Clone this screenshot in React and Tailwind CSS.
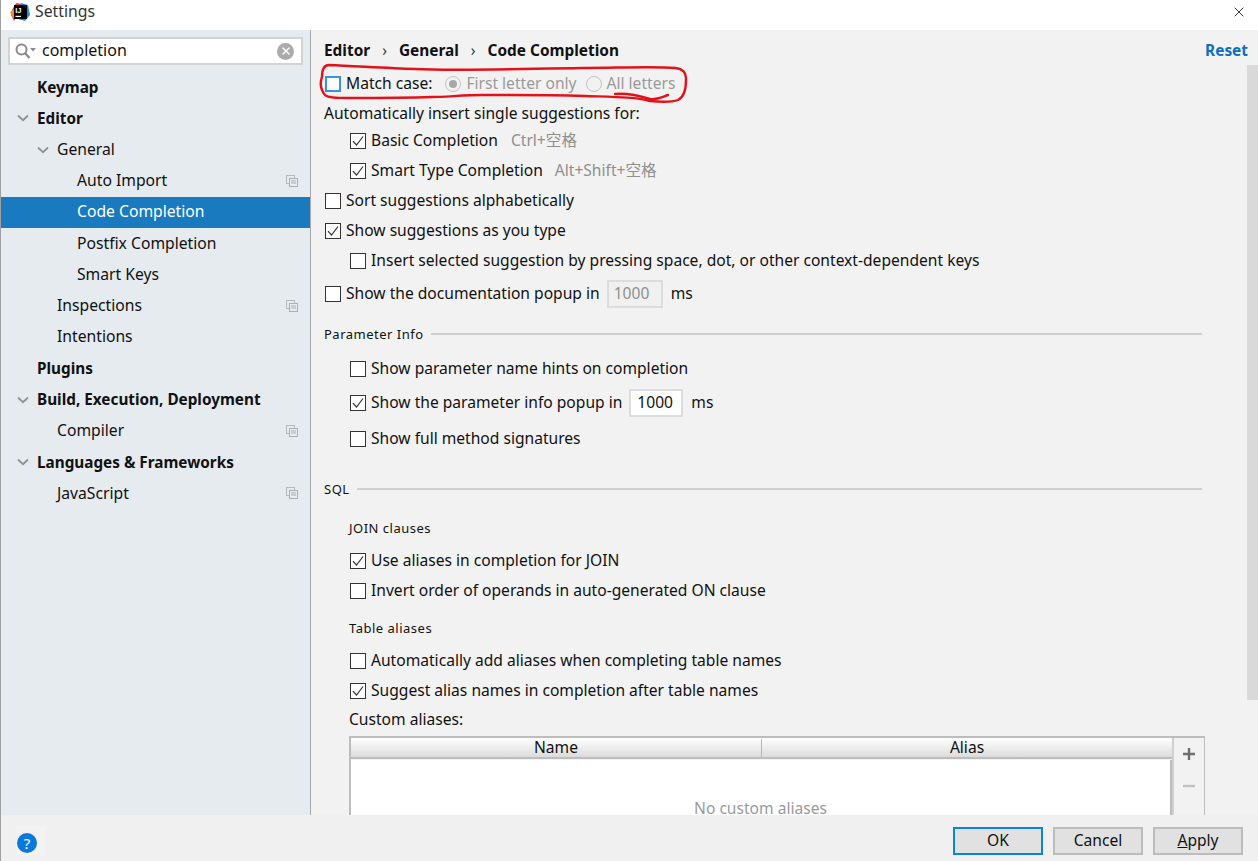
import { X } from "lucide-react";

const treeItems = [
  { label: "Keymap", indent: "pl-[36px]", bold: true },
  { label: "Editor", indent: "pl-[36px]", bold: true, arrow: "left-[16px]" },
  { label: "General", indent: "pl-[56px]", arrow: "left-[36px]" },
  { label: "Auto Import", indent: "pl-[76px]", copy: true },
  { label: "Code Completion", indent: "pl-[76px]", selected: true },
  { label: "Postfix Completion", indent: "pl-[76px]" },
  { label: "Smart Keys", indent: "pl-[76px]" },
  { label: "Inspections", indent: "pl-[56px]", copy: true },
  { label: "Intentions", indent: "pl-[56px]" },
  { label: "Plugins", indent: "pl-[36px]", bold: true },
  { label: "Build, Execution, Deployment", indent: "pl-[36px]", bold: true, arrow: "left-[16px]" },
  { label: "Compiler", indent: "pl-[56px]", copy: true },
  { label: "Languages & Frameworks", indent: "pl-[36px]", bold: true, arrow: "left-[16px]" },
  { label: "JavaScript", indent: "pl-[56px]", copy: true },
];

function AppLogo() {
  return (
    <svg width="20" height="20" viewBox="0 0 20 20" className="shrink-0">
      <path d="M2 8 L6 1 L12 2 L9 12 L4 19 L1 13 Z" fill="#f0326a" />
      <path d="M0 10 L5 7 L7 15 L3 16 Z" fill="#f78c2c" />
      <path d="M11 1 L18 3 L20 13 L15 19 L8 17 Z" fill="#1f8ceb" />
      <rect x="4" y="3" width="13" height="14" fill="#000" />
      <text x="5.2" y="10.5" fontSize="7.5" fontWeight="700" fill="#fff" fontFamily="Liberation Sans, sans-serif">IJ</text>
      <rect x="5.5" y="13.8" width="5.5" height="1.2" fill="#fff" />
    </svg>
  );
}

function CopyIcon() {
  return (
    <svg width="12" height="12" viewBox="0 0 12 12" className="absolute left-[285px] top-1/2 -translate-y-1/2">
      <rect x="0.5" y="0.5" width="8" height="8" fill="none" stroke="#b3bac1" />
      <rect x="3.5" y="3.5" width="8" height="8" fill="#e6ebf0" stroke="#a9b0b7" />
      <path d="M5 6h5M5 8h5" stroke="#a9b0b7" />
    </svg>
  );
}

function TreeRow({ item }) {
  return (
    <div
      className={`relative flex h-[31.25px] items-center ${item.indent} ${item.bold ? "text-[15.3px] font-bold" : "text-[15.7px]"} ${item.selected ? "bg-[#1a7abf] text-white" : "text-[#111111]"}`}
    >
      {item.arrow && (
        <svg width="12" height="8" viewBox="0 0 12 8" className={`absolute top-1/2 -translate-y-1/2 ${item.arrow}`}>
          <path d="M1 1.5 L6 6.2 L11 1.5" fill="none" stroke="#8d9296" strokeWidth="1.8" />
        </svg>
      )}
      {item.label}
      {item.copy && <CopyIcon />}
    </div>
  );
}

function Checkbox({ checked, focused }) {
  return (
    <span
      className={`flex h-[16px] w-[16px] shrink-0 items-center justify-center bg-white ${focused ? "border-2 border-[#3b93df]" : "border border-[#333333]"}`}
    >
      {checked && (
        <svg width="14" height="14" viewBox="0 0 14 14">
          <path d="M2 7.2 L5.5 11 L12 2.5" fill="none" stroke="#333333" strokeWidth="1.2" />
        </svg>
      )}
    </span>
  );
}

function OptionRow({ checked, label, nested, className = "h-[30px]", children }) {
  return (
    <div className={`flex items-center gap-[5px] ${nested ? "pl-[26px]" : "pl-[1px]"} ${className}`}>
      <Checkbox checked={checked} />
      <span>{label}</span>
      {children}
    </div>
  );
}

function Radio({ selected }) {
  return (
    <span className="flex h-[16px] w-[16px] shrink-0 items-center justify-center rounded-full border border-[#c4c4c4] bg-[#f2f2f2]">
      {selected && <span className="h-[8px] w-[8px] rounded-full bg-[#a8a8a8]" />}
    </span>
  );
}

function SectionTitle({ title, className }) {
  return (
    <div className={`flex items-center gap-[7px] text-[13px] tracking-[0.5px] ${className}`}>
      <span>{title}</span>
      <span className="mb-[3px] h-[2px] flex-1 bg-[#cfcfcf]" />
    </div>
  );
}

function Settings() {
  return (
    <div className="relative flex-1 overflow-hidden bg-[#f2f2f2] pl-[13px] pr-[10px] text-[15.6px] text-[#111111]">
      <div className="flex h-[33px] items-end justify-between pb-[1px] text-[15.4px]">
        <div className="flex items-center gap-[12px] font-bold">
          <span>Editor</span>
          <span className="font-normal text-[#333333]">›</span>
          <span>General</span>
          <span className="font-normal text-[#333333]">›</span>
          <span>Code Completion</span>
        </div>
        <span className="font-bold text-[#0d6fc4]">Reset</span>
      </div>

      <div className="mt-[6px] flex h-[30px] items-center pl-[1px]">
        <div className="flex items-center gap-[5px]">
          <Checkbox focused />
          <span>Match case:</span>
        </div>
        <div className="ml-[13px] flex items-center gap-[5px] text-[#9a9a9a]">
          <Radio selected />
          <span>First letter only</span>
        </div>
        <div className="ml-[9px] flex items-center gap-[5px] text-[#9a9a9a]">
          <Radio />
          <span>All letters</span>
        </div>
      </div>
      <div className="flex h-[29px] items-center">Automatically insert single suggestions for:</div>
      <OptionRow checked nested label="Basic Completion" className="h-[26px]">
        <span className="ml-[8px] text-[#8f8f8f]">Ctrl+空格</span>
      </OptionRow>
      <OptionRow checked nested label="Smart Type Completion" className="mt-[2px] h-[30px]">
        <span className="ml-[7px] text-[#8f8f8f]">Alt+Shift+空格</span>
      </OptionRow>
      <OptionRow label="Sort suggestions alphabetically" />
      <OptionRow checked label="Show suggestions as you type" />
      <OptionRow nested label="Insert selected suggestion by pressing space, dot, or other context-dependent keys" />
      <OptionRow label="Show the documentation popup in" className="h-[36px]">
        <span className="ml-[2px] flex h-[28px] w-[56px] items-center border-2 border-[#dcdcdc] bg-[#f0f0f0] pl-[5px] text-[#8f8f8f]">1000</span>
        <span className="ml-[3px]">ms</span>
      </OptionRow>

      <SectionTitle title="Parameter Info" className="mt-[8px] mr-[46px] h-[30px]" />
      <OptionRow nested label="Show parameter name hints on completion" className="mt-[1px] h-[36px]" />
      <OptionRow checked nested label="Show the parameter info popup in" className="h-[32px]">
        <span className="ml-[2px] flex h-[28px] w-[54px] items-center border-2 border-[#dcdcdc] bg-white pl-[6px]">1000</span>
        <span className="ml-[3px]">ms</span>
      </OptionRow>
      <OptionRow nested label="Show full method signatures" className="h-[40px]" />

      <SectionTitle title="SQL" className="mt-[16px] mr-[46px] h-[30px]" />
      <div className="flex h-[37px] items-end pl-[25px] text-[13px] tracking-[0.5px]">
        <span className="pb-[4px]">JOIN clauses</span>
      </div>
      <div className="mt-[4px]">
        <OptionRow checked nested label="Use aliases in completion for JOIN" />
        <OptionRow nested label="Invert order of operands in auto-generated ON clause" />
      </div>
      <div className="flex h-[37px] items-center pl-[25px] pt-[9px] text-[13px] tracking-[0.5px]">Table aliases</div>
      <OptionRow nested label="Automatically add aliases when completing table names" className="mt-[3px] h-[30px]" />
      <OptionRow checked nested label="Suggest alias names in completion after table names" />
      <div className="flex h-[28px] items-center pl-[25px]">Custom aliases:</div>

      <div className="ml-[25px] mr-[43px] mt-[2px] flex h-[100px] border-t-2 border-l-2 border-r border-[#bdbdbd]">
        <div className="flex flex-1 flex-col border-r-2 border-[#d0d0d0]">
          <div className="flex h-[21px] border-b-2 border-[#bdbdbd] bg-gradient-to-b from-white to-[#dcdcdc] pt-[1px]">
            <div className="flex w-[411px] items-center justify-center border-r border-[#b5b5b5]">Name</div>
            <div className="flex flex-1 items-center justify-center">Alias</div>
          </div>
          <div className="mt-[1px] flex flex-1 justify-center border-r-2 border-[#bdbdbd] bg-white pt-[37px] text-[#9a9a9a]">
            No custom aliases
          </div>
        </div>
        <div className="flex w-[30px] flex-col items-center pt-[9px]">
          <svg width="14" height="14" viewBox="0 0 14 14">
            <path d="M7 1v12M1 7h12" stroke="#6e6e6e" strokeWidth="2.4" />
          </svg>
          <svg width="14" height="14" viewBox="0 0 14 14" className="mt-[18px]">
            <path d="M1 7h12" stroke="#c2c2c2" strokeWidth="2.4" />
          </svg>
        </div>
      </div>

      <div className="absolute right-0 top-[35px] h-[635px] w-[11px] bg-[#d9d9d9]" />
      <svg width="380" height="45" viewBox="0 0 380 45" className="absolute left-[4px] top-[30px]" fill="none" stroke="#e3111a" strokeWidth="2.4" strokeLinecap="round" strokeLinejoin="round">
        <path d="M7 17 C7 9 9 5 14 5 C40 6 70 8 100 9 C140 11 200 9 267 8 C300 8 340 6 360 8 C368 9 371 12 371 20 C371 30 369 37 363 40 C355 43 345 42 335 41 C320 37 300 37 270 36 C230 35 200 35 167 35 C150 35 130 37 117 37 C90 38 55 38 33 38 C22 38 13 38 10 35 C6 30 4 25 7 17 Z" />
        <path d="M300 34 C312 33 322 35 335 39 C341 40 347 37 353 35" />
      </svg>
    </div>
  );
}

function FooterButton({ children, primary }) {
  return (
    <span
      className={`flex h-[28px] w-[90px] items-center justify-center border-2 bg-[#e1e1e1] text-[15.6px] text-[#111111] ${primary ? "border-[#0a84e0]" : "border-[#bcbcbc]"}`}
    >
      {children}
    </span>
  );
}

export default function App() {
  return (
    <div className="flex h-[861px] w-[1258px] flex-col overflow-hidden border-l border-[#a0a0a0] bg-white font-['Noto_Sans','Noto_Sans_CJK_SC',sans-serif]">
      <div className="flex h-[30px] items-center bg-white pb-[6px] pl-[9px] pr-[12px] text-[15.8px] text-[#333333]">
        <AppLogo />
        <span className="ml-[5px] flex-1">Settings</span>
        <X size={16} strokeWidth={1.2} className="mr-[-1px] text-black" />
      </div>

      <div className="flex min-h-0 flex-1">
        <div className="w-[310px] shrink-0 border-r border-[#a8a8a8] bg-[#e6ebf0]">
          <div className="px-[7px] pt-[7px]">
            <div className="flex h-[28px] w-[295px] items-center border-2 border-[#d3d3d3] bg-white pl-[5px] pr-[7px] text-[16px] text-[#111111]">
              <svg width="22" height="16" viewBox="0 0 22 16" className="shrink-0">
                <circle cx="6.5" cy="6.5" r="5" fill="none" stroke="#8a8a8a" strokeWidth="2" />
                <path d="M10 10 L14.5 15" stroke="#8a8a8a" strokeWidth="2.2" />
                <path d="M15 5 L21 5 L18 8.5 Z" fill="#8a8a8a" />
              </svg>
              <span className="ml-[5px] flex-1 pb-[2px]">completion</span>
              <span className="flex h-[17px] w-[17px] items-center justify-center rounded-full bg-[#ababab]">
                <X size={12} strokeWidth={3} className="text-white" />
              </span>
            </div>
          </div>
          <div className="mt-[6.6px]">
            {treeItems.map((item) => (
              <TreeRow key={item.label} item={item} />
            ))}
          </div>
        </div>
        <Settings />
      </div>

      <div className="flex h-[46px] shrink-0 items-center justify-between bg-[#f0f0f0] pl-[15px] pr-[15px] pt-[6px]">
        <span className="flex h-[30px] w-[30px] justify-start bg-[#f3f3f3] pl-[1px] pt-[7px]">
          <span className="flex h-[20px] w-[20px] items-center justify-center rounded-full bg-[#0a78dc] text-[15px] leading-none text-white">?</span>
        </span>
        <div className="flex gap-[10px]">
          <FooterButton primary>OK</FooterButton>
          <FooterButton>Cancel</FooterButton>
          <FooterButton>
            <span><u>A</u>pply</span>
          </FooterButton>
        </div>
      </div>
    </div>
  );
}
